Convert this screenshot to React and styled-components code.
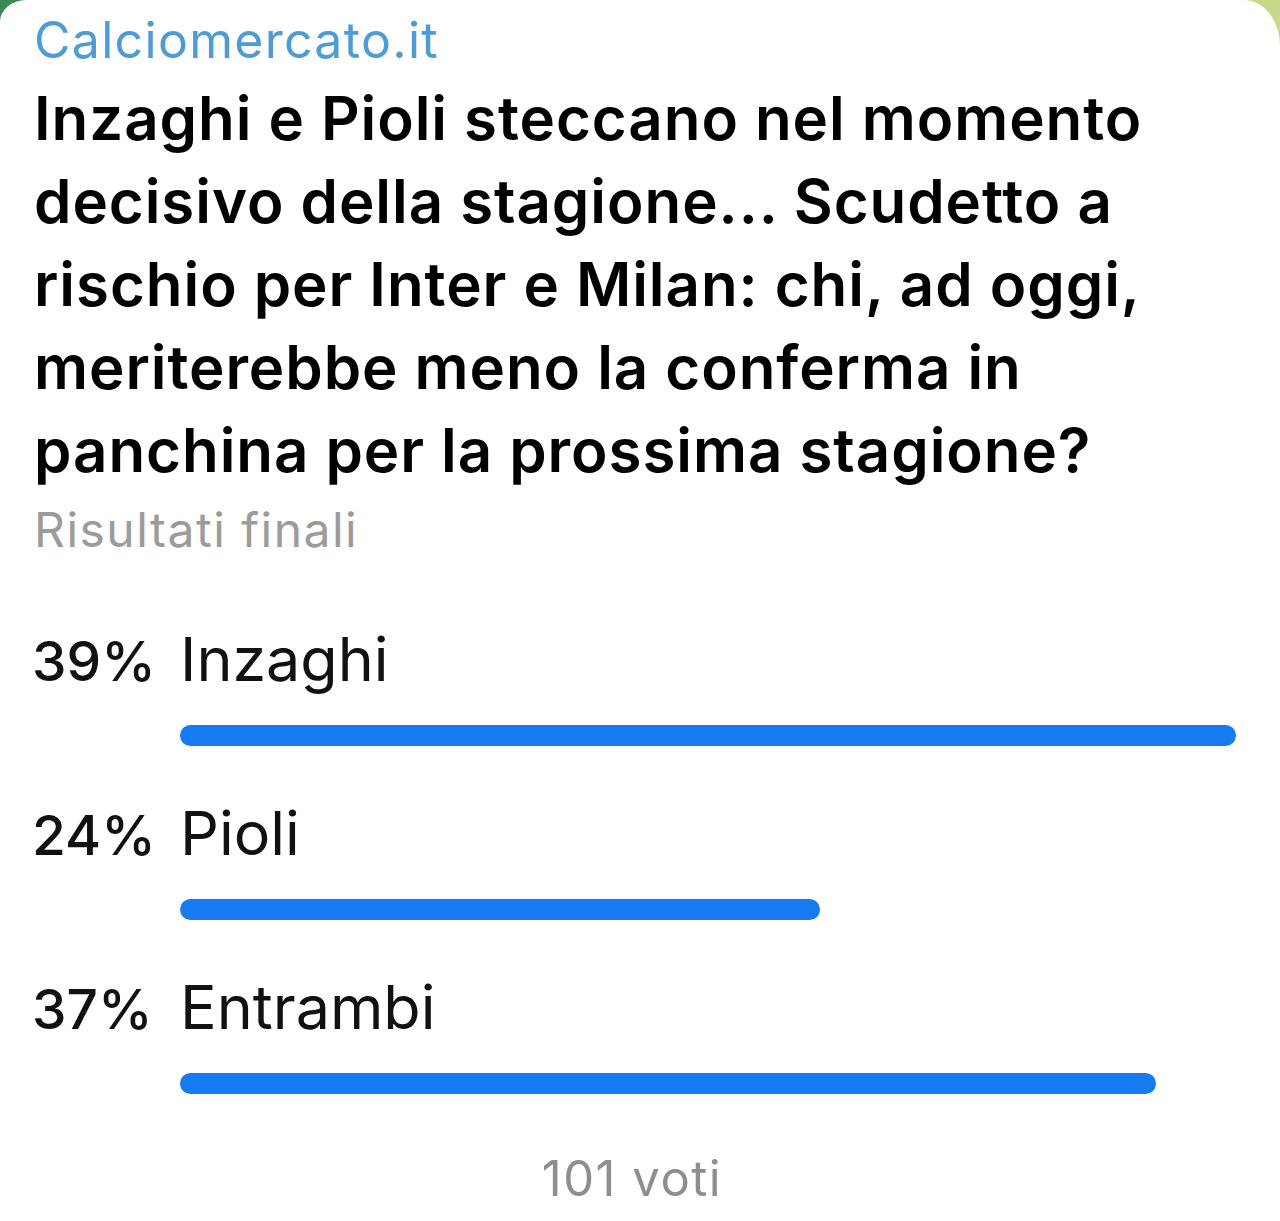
import React from "react";
import styled, { createGlobalStyle } from "styled-components";

const options = [
  { percent: 39, label: "Inzaghi", share: 1 },
  { percent: 24, label: "Pioli", share: 0.606 },
  { percent: 37, label: "Entrambi", share: 0.924 },
];

export default function App() {
  return (
    <>
      <GlobalStyle />
      <Page>
        <Card>
          <Source>Calciomercato.it</Source>
          <Question>
            Inzaghi e Pioli steccano nel momento
            <br />
            decisivo della stagione... Scudetto a
            <br />
            rischio per Inter e Milan: chi, ad oggi,
            <br />
            meriterebbe meno la conferma in
            <br />
            panchina per la prossima stagione?
          </Question>
          <Status>Risultati finali</Status>
          <OptionList>
            {options.map((opt) => (
              <Option key={opt.label}>
                <Percent>{opt.percent}%</Percent>
                <Label>{opt.label}</Label>
                <Track>
                  <Bar style={{ width: `${opt.share * 100}%` }} />
                </Track>
              </Option>
            ))}
          </OptionList>
          <Votes>101 voti</Votes>
        </Card>
      </Page>
    </>
  );
}

const GlobalStyle = createGlobalStyle`
  html, body {
    margin: 0;
    padding: 0;
  }
  body {
    font-family: Inter, "Noto Sans", "Liberation Sans", sans-serif;
    -webkit-font-smoothing: antialiased;
  }
`;

const Page = styled.div`
  width: 1280px;
  height: 1221px;
  overflow: hidden;
  background: linear-gradient(to right, #3a8a56 0%, #7fb070 50%, #c9d98c 100%);
`;

const Card = styled.div`
  height: 100%;
  box-sizing: border-box;
  background: #ffffff;
  border-top-left-radius: 26px 22px;
  border-top-right-radius: 36px 46px;
  padding: 10px 44px 0 32px;
  display: flex;
  flex-direction: column;
`;

const Source = styled.div`
  font-size: 50px;
  line-height: 60px;
  font-weight: 400;
  color: #4f9bd6;
  letter-spacing: 1.3px;
  padding-left: 2px;
`;

const Question = styled.div`
  margin-top: 7px;
  font-size: 60px;
  line-height: 83px;
  font-weight: 600;
  color: #000;
  padding-left: 2px;
  letter-spacing: 0.95px;
`;

const Status = styled.div`
  margin-top: 8px;
  font-size: 48px;
  line-height: 60px;
  color: #9b9b9b;
  letter-spacing: 1.5px;
  padding-left: 2px;
`;

const OptionList = styled.div`
  margin-top: 64px;
  display: flex;
  flex-direction: column;
  gap: 52px;
`;

const Option = styled.div`
  display: grid;
  grid-template-columns: 120px 1fr;
  column-gap: 28px;
  row-gap: 29px;
  align-items: baseline;
`;

const Percent = styled.div`
  font-size: 55px;
  line-height: 70px;
  font-weight: 500;
  color: #111;
  text-align: right;
`;

const Label = styled.div`
  font-size: 61px;
  line-height: 70px;
  font-weight: 400;
  color: #111;
`;

const Track = styled.div`
  grid-column: 2;
  height: 21px;
`;

const Bar = styled.div`
  height: 100%;
  border-radius: 11px;
  background: #167bf1;
`;

const Votes = styled.div`
  margin-top: 55px;
  font-size: 49px;
  line-height: 60px;
  color: #8e8e8e;
  letter-spacing: 1.5px;
  text-align: center;
  padding-right: 4px;
`;
